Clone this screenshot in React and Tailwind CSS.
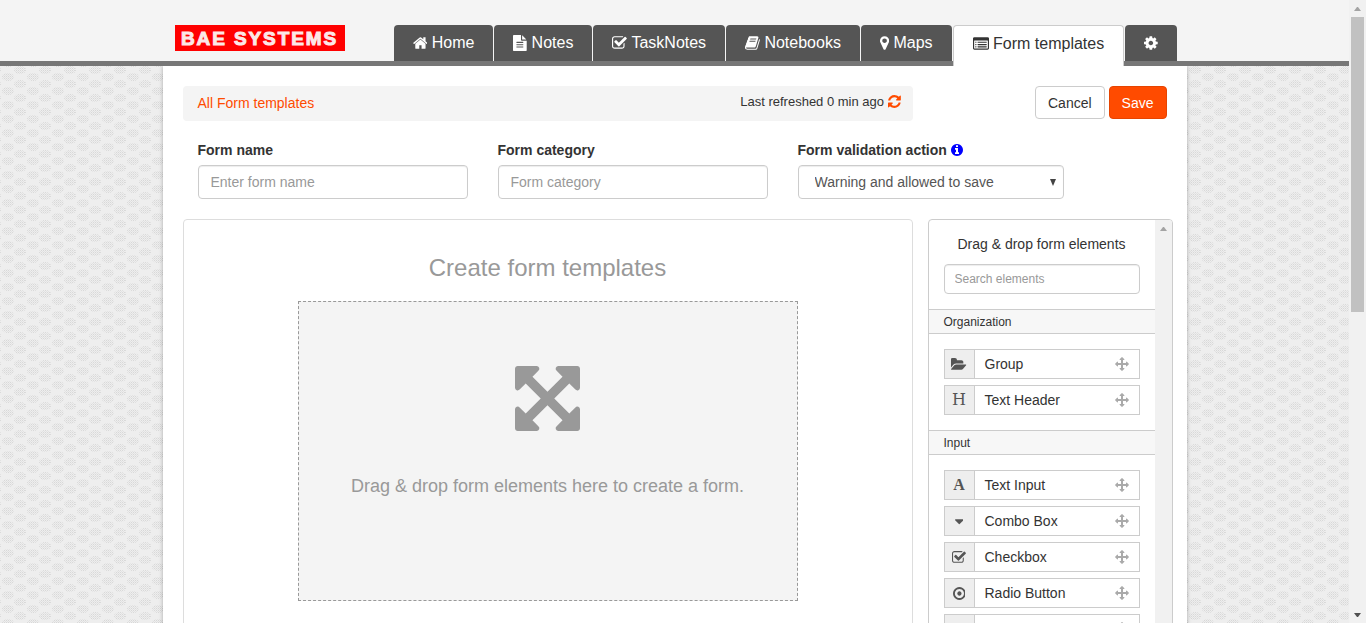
import React from "react";
import { clsx } from "clsx";

const dash = (y) =>
  `M384 ${y}v64q0 13-9.5 22.5t-22.5 9.5h-64q-13 0-22.5-9.5t-9.5-22.5v-64q0-13 9.5-22.5t22.5-9.5h64q13 0 22.5 9.5t9.5 22.5z` +
  `M1536 ${y}v64q0 13-9.5 22.5t-22.5 9.5h-960q-13 0-22.5-9.5t-9.5-22.5v-64q0-13 9.5-22.5t22.5-9.5h960q13 0 22.5 9.5t9.5 22.5z`;

const ICONS = {
  home: ["64 0 1664 1792", "M1472 992v480q0 26-19 45t-45 19h-384v-384h-256v384h-384q-26 0-45-19t-19-45v-480q0-1 .5-3t.5-3l575-474 575 474q1 2 1 6zm223-69l-62 74q-8 9-21 11h-3q-13 0-21-7l-692-577-692 577q-12 8-24 7-13-2-21-11l-62-74q-8-10-7-23.5t11-21.5l719-599q32-26 76-26t76 26l244 204v-195q0-14 9-23t23-9h192q14 0 23 9t9 23v408l219 182q10 8 11 21.5t-7 23.5z"],
  file: ["128 0 1536 1792", "M1596 476q14 14 28 36h-472v-472q22 14 36 28zm-476 164h544v1056q0 40-28 68t-68 28h-1344q-40 0-68-28t-28-68v-1600q0-40 28-68t68-28h800v544q0 40 28 68t68 28zm160 736v-64q0-14-9-23t-23-9h-704q-14 0-23 9t-9 23v64q0 14 9 23t23 9h704q14 0 23-9t9-23zm0-256v-64q0-14-9-23t-23-9h-704q-14 0-23 9t-9 23v64q0 14 9 23t23 9h704q14 0 23-9t9-23zm0-256v-64q0-14-9-23t-23-9h-704q-14 0-23 9t-9 23v64q0 14 9 23t23 9h704q14 0 23-9t9-23z"],
  check: ["64 0 1664 1792", "M1472 930v318q0 119-84.5 203.5t-203.5 84.5h-832q-119 0-203.5-84.5t-84.5-203.5v-832q0-119 84.5-203.5t203.5-84.5h832q63 0 117 25 15 7 18 23 3 17-9 29l-49 49q-10 10-23 10-3 0-9-2-23-6-45-6h-832q-66 0-113 47t-47 113v832q0 66 47 113t113 47h832q66 0 113-47t47-113v-254q0-13 9-22l64-64q10-10 23-10 6 0 12 3 20 8 20 29zm231-489l-814 814q-24 24-57 24t-57-24l-430-430q-24-24-24-57t24-57l110-110q24-24 57-24t57 24l263 263 647-647q24-24 57-24t57 24l110 110q24 24 24 57t-24 57z"],
  book: ["64 0 1664 1792", "M1703 478q40 57 18 129l-275 906q-19 64-76.5 107.5t-122.5 43.5h-923q-77 0-148.5-53.5t-99.5-131.5q-24-67-2-127 0-4 3-27t4-37q1-8-3-21.5t-3-19.5q2-11 8-21t16.5-23.5 16.5-23.5q23-38 45-91.5t30-91.5q3-10 .5-30t-.5-28q3-11 17-28t17-23q21-36 42-92t25-90q1-9-2.5-32t.5-28q4-13 22-30.5t22-22.5q19-26 42.5-84.5t27.5-96.5q1-8-3-25.5t-2-26.5q2-8 9-18t18-23 17-21q8-12 16.5-30.5t15-35 16-36 19.5-32 26.5-23.5 36-11.5 47.5 5.5l-1 3q38-9 51-9h761q74 0 114 56t18 130l-274 906q-36 119-71.5 153.5t-128.5 34.5h-869q-27 0-38 15-11 16-1 43 24 70 144 70h923q29 0 56-15.5t35-41.5l300-987q7-22 5-57 38 15 59 43zm-1064 2q-4 13 2 22.5t20 9.5h608q13 0 25.5-9.5t16.5-22.5l21-64q4-13-2-22.5t-20-9.5h-608q-13 0-25.5 9.5t-16.5 22.5zm-83 256q-4 13 2 22.5t20 9.5h608q13 0 25.5-9.5t16.5-22.5l21-64q4-13-2-22.5t-20-9.5h-608q-13 0-25.5 9.5t-16.5 22.5z"],
  marker: ["384 0 1024 1792", "M1152 640q0-106-75-181t-181-75-181 75-75 181 75 181 181 75 181-75 75-181zm256 0q0 109-33 179l-364 774q-16 33-47.5 52t-67.5 19-67.5-19-46.5-52l-365-774q-33-70-33-179 0-212 150-362t362-150 362 150 150 362z"],
  list: ["0 0 1792 1792", dash(1184) + dash(928) + dash(672) + "M1664 1376v-832q0-13-9.5-22.5t-22.5-9.5h-1472q-13 0-22.5 9.5t-9.5 22.5v832q0 13 9.5 22.5t22.5 9.5h1472q13 0 22.5-9.5t9.5-22.5zm128-1088v1088q0 66-47 113t-113 47h-1472q-66 0-113-47t-47-113v-1088q0-66 47-113t113-47h1472q66 0 113 47t47 113z"],
  cog: ["128 0 1536 1792", "M1152 896q0-106-75-181t-181-75-181 75-75 181 75 181 181 75 181-75 75-181zm512-109v222q0 12-8 23t-20 13l-185 28q-19 54-39 91 35 50 107 138 10 12 10 25t-9 23q-27 37-99 108t-94 71q-12 0-26-9l-138-108q-44 23-91 38-16 136-29 186-7 28-36 28h-222q-14 0-24.5-8.5t-11.5-21.5l-28-184q-49-16-90-37l-141 107q-10 9-25 9-14 0-25-11-126-114-165-168-7-10-7-23 0-12 8-23 15-21 51-66.5t54-70.5q-27-50-41-99l-183-27q-13-2-21-12.5t-8-23.5v-222q0-12 8-23t19-13l186-28q14-46 39-92-40-57-107-138-10-12-10-24 0-10 9-23 26-36 98.5-107.5t94.5-71.5q13 0 26 10l138 107q44-23 91-38 16-136 29-186 7-28 36-28h222q14 0 24.5 8.5t11.5 21.5l28 184q49 16 90 37l142-107q9-9 24-9 13 0 25 10 129 119 165 170 7 8 7 22 0 12-8 23-15 21-51 66.5t-54 70.5q26 50 41 98l183 28q13 2 21 12.5t8 23.5z"],
  refresh: ["128 0 1536 1792", "M1639 1056q0 5-1 7-64 268-268 434.5t-478 166.5q-146 0-282.5-55t-243.5-157l-129 129q-19 19-45 19t-45-19-19-45v-448q0-26 19-45t45-19h448q26 0 45 19t19 45-19 45l-137 137q71 66 161 102t187 36q134 0 250-65t186-179q11-17 53-117 8-23 30-23h192q13 0 22.5 9.5t9.5 22.5zm25-800v448q0 26-19 45t-45 19h-448q-26 0-45-19t-19-45 19-45l138-138q-148-137-349-137-134 0-250 65t-186 179q-11 17-53 117-8 23-30 23h-199q-13 0-22.5-9.5t-9.5-22.5v-7q65-268 270-434.5t480-166.5q146 0 284 55.5t245 156.5l130-129q19-19 45-19t45 19 19 45z"],
  info: ["128 0 1536 1792", "M1152 1376v-160q0-14-9-23t-23-9h-96v-512q0-14-9-23t-23-9h-320q-14 0-23 9t-9 23v160q0 14 9 23t23 9h96v320h-96q-14 0-23 9t-9 23v160q0 14 9 23t23 9h448q14 0 23-9t9-23zm-128-896v-160q0-14-9-23t-23-9h-192q-14 0-23 9t-9 23v160q0 14 9 23t23 9h192q14 0 23-9t9-23zm640 416q0 209-103 385.5t-279.5 279.5-385.5 103-385.5-103-279.5-279.5-103-385.5 103-385.5 279.5-279.5 385.5-103 385.5 103 279.5 279.5 103 385.5z"],
  folder: ["0 0 1820 1792", "M1815 952q0 31-31 66l-336 396q-43 51-120.5 86.5t-143.5 35.5h-1088q-34 0-60.5-13t-26.5-43q0-31 31-66l336-396q43-51 120.5-86.5t143.5-35.5h1088q34 0 60.5 13t26.5 43zm-343-344v160h-832q-94 0-197 47.5t-164 119.5l-337 396-5 6q0-4-.5-12.5t-.5-12.5v-960q0-92 66-158t158-66h320q92 0 158 66t66 158v32h544q92 0 158 66t66 158z"],
  move: ["0 0 1792 1792", "M1792 896q0 26-19 45l-256 256q-19 19-45 19t-45-19-19-45v-128h-384v384h128q26 0 45 19t19 45-19 45l-256 256q-19 19-45 19t-45-19l-256-256q-19-19-19-45t19-45 45-19h128v-384h-384v128q0 26-19 45t-45 19-45-19l-256-256q-19-19-19-45t19-45l256-256q19-19 45-19t45 19 19 45v128h384v-384h-128q-26 0-45-19t-19-45 19-45l256-256q19-19 45-19t45 19l256 256q19 19 19 45t-19 45-45 19h-128v384h384v-128q0-26 19-45t45-19 45 19l256 256q19 19 19 45z"],
  caret: ["384 0 1024 1792", "M1408 704q0 26-19 45l-448 448q-19 19-45 19t-45-19l-448-448q-19-19-19-45t19-45 45-19h896q26 0 45 19t19 45z"],
  radio: ["128 0 1536 1792", "M1152 896q0 106-75 181t-181 75-181-75-75-181 75-181 181-75 181 75 75 181zm-256-544q-148 0-273 73t-198 198-73 273 73 273 198 198 273 73 273-73 198-198 73-273-73-273-198-198-273-73zm768 544q0 209-103 385.5t-279.5 279.5-385.5 103-385.5-103-279.5-279.5-103-385.5 103-385.5 279.5-279.5 385.5-103 385.5 103 279.5 279.5 103 385.5z"],
  expand: ["128 128 1536 1536", "M1411 541l-355 355 355 355 144-144q29-31 70-14 39 17 39 59v448q0 26-19 45t-45 19h-448q-42 0-59-40-17-39 14-69l144-144-355-355-355 355 144 144q31 30 14 69-17 40-59 40h-448q-26 0-45-19t-19-45v-448q0-42 40-59 39-17 69 14l144 144 355-355-355-355-144 144q-19 19-45 19-12 0-24-5-40-17-40-59v-448q0-26 19-45t45-19h448q42 0 59 40 17 39-14 69l-144 144 355 355 355-355-144-144q-31-30-14-69 17-40 59-40h448q26 0 45 19t19 45v448q0 42-39 59-13 5-25 5-26 0-45-19z"],
};

function Icon({ name, className }) {
  const [viewBox, d] = ICONS[name];
  return (
    <svg viewBox={viewBox} fill="currentColor" aria-hidden="true" className={clsx("w-auto shrink-0", className)}>
      <path d={d} fillRule={name === "list" ? "evenodd" : "nonzero"} />
    </svg>
  );
}

const TABS = [
  { icon: "home", label: "Home" },
  { icon: "file", label: "Notes" },
  { icon: "check", label: "TaskNotes" },
  { icon: "book", label: "Notebooks" },
  { icon: "marker", label: "Maps" },
  { icon: "list", label: "Form templates", active: true },
  { icon: "cog", title: "Settings" },
];

function Tab({ icon, label, active, title }) {
  return (
    <a
      href="#"
      aria-label={title}
      aria-current={active ? "page" : undefined}
      className={clsx(
        "flex items-center rounded-t text-base leading-6 whitespace-pre",
        active
          ? "-mb-[5px] h-[41px] border border-b-0 border-[#ccc] bg-white px-[19px] pb-1 text-[#333]"
          : "h-9 bg-[#555] px-[19px] text-white"
      )}
    >
      <Icon name={icon} className="h-4" />
      {label && ` ${label}`}
    </a>
  );
}

const FIELD =
  "w-full rounded border border-[#ccc] bg-white text-[#555] shadow-[inset_0_1px_1px_rgba(0,0,0,0.075)] outline-none placeholder:text-[#999]";

function ElementRow({ icon, glyph, bold, label }) {
  return (
    <li className="flex h-[30px] items-stretch border border-[#ccc] bg-white">
      <span className="flex w-[30px] items-center justify-center border-r border-[#ccc] bg-[#eee] text-[#555]">
        {glyph && (
          <span className={clsx("font-['DejaVu_Serif','Liberation_Serif',serif] text-base leading-none", bold && "font-['Liberation_Serif',serif] font-bold")}>
            {glyph}
          </span>
        )}
        {icon && <Icon name={icon} className="h-[15px]" />}
      </span>
      <span className="flex flex-1 items-center px-2.5 text-sm">{label}</span>
      <span className="flex items-center px-2.5 text-[#aaa]">
        <Icon name="move" className="h-3.5" />
      </span>
    </li>
  );
}

function Section({ title, items }) {
  return (
    <section>
      <h3 className="border-y border-[#ccc] bg-[#f7f7f7] px-[15px] pt-1 pb-0.5 text-xs leading-[17px]">{title}</h3>
      <ul className="flex flex-col gap-1.5 p-[15px]">
        {items.map((item) => (
          <ElementRow key={item.label} {...item} />
        ))}
      </ul>
    </section>
  );
}

function Backdrop() {
  return (
    <svg className="absolute inset-0 -z-10 h-full w-full" aria-hidden="true">
      <defs>
        <pattern id="dots" width="2" height="2" patternUnits="userSpaceOnUse">
          <rect width="1" height="1" fill="#d8d8d8" />
          <rect x="1" y="1" width="1" height="1" fill="#e2e2e2" />
        </pattern>
        <pattern id="scales" width="25" height="14" patternUnits="userSpaceOnUse">
          <rect width="25" height="14" fill="#eeeeee" />
          <ellipse cx="8" cy="7" rx="6" ry="4" fill="url(#dots)" />
          <ellipse cx="20" cy="0" rx="6" ry="4" fill="url(#dots)" />
          <ellipse cx="20" cy="14" rx="6" ry="4" fill="url(#dots)" />
          <ellipse cx="-5" cy="0" rx="6" ry="4" fill="url(#dots)" />
          <ellipse cx="-5" cy="14" rx="6" ry="4" fill="url(#dots)" />
        </pattern>
      </defs>
      <rect width="100%" height="100%" fill="url(#scales)" shapeRendering="crispEdges" />
    </svg>
  );
}

export default function App() {
  return (
    <div className="flex h-screen overflow-hidden font-['Liberation_Sans',Arial,sans-serif] text-sm leading-5 text-[#333]">
      <div className="relative isolate flex min-w-0 flex-1 flex-col overflow-hidden">
        <Backdrop />
        <header className="shrink-0 border-b-[5px] border-[#777] bg-[#f4f4f4]">
          <div className="mx-auto flex max-w-[1024px] items-start pt-[25px] pl-3">
            <a href="#" className="mr-[49px] flex h-[26px] w-[170px] items-center justify-center bg-[#f00] text-[19px] leading-none font-bold tracking-widest whitespace-nowrap text-[#fce8e8] [-webkit-text-stroke:1px_#fce8e8]">
              BAE SYSTEMS
            </a>
            <nav className="flex items-start gap-px">
              {TABS.map((tab) => (
                <Tab key={tab.icon} {...tab} />
              ))}
            </nav>
          </div>
        </header>

        <main className="mx-auto flex w-full max-w-[1024px] flex-1 flex-col bg-white px-5 pt-5 shadow-[0_0_4px_rgba(0,0,0,0.3)] [clip-path:inset(0_-6px)]">
          <div className="flex items-start justify-between">
            <div className="flex h-[35px] w-[730px] items-center justify-between rounded bg-[#f4f4f4] pr-3 pb-0.5 pl-[15px]">
              <a href="#" className="text-[#ff4b00]">All Form templates</a>
              <span className="flex items-center pb-0.5 text-[13px] whitespace-pre">
                {"Last refreshed 0 min ago "}
                <button type="button" aria-label="Refresh" className="text-[#ff4b00]">
                  <Icon name="refresh" className="h-[15px]" />
                </button>
              </span>
            </div>
            <div className="flex gap-1">
              <button type="button" className="h-[33px] rounded border border-[#ccc] bg-white px-3">Cancel</button>
              <button type="button" className="h-[33px] rounded border border-[#e64400] bg-[#ff4b00] px-3 text-white">Save</button>
            </div>
          </div>

          <div className="mt-[19px] flex gap-[30px] px-[15px]">
            <div className="flex w-[270px] flex-col gap-[5px]">
              <label htmlFor="name" className="font-bold">Form name</label>
              <input id="name" type="text" placeholder="Enter form name" className={clsx(FIELD, "h-[34px] px-3")} />
            </div>
            <div className="flex w-[270px] flex-col gap-[5px]">
              <label htmlFor="category" className="font-bold">Form category</label>
              <input id="category" type="text" placeholder="Form category" className={clsx(FIELD, "h-[34px] px-3")} />
            </div>
            <div className="flex w-[266px] flex-col gap-[5px]">
              <label htmlFor="action" className="flex items-center gap-1 font-bold">
                Form validation action
                <Icon name="info" className="h-3.5 text-[#00f]" />
              </label>
              <div className="relative">
                <select id="action" className={clsx(FIELD, "h-[34px] appearance-none px-4")}>
                  <option>Warning and allowed to save</option>
                </select>
                <svg viewBox="0 0 6 7" className="pointer-events-none absolute top-3.5 right-2 h-[7px] w-1.5" aria-hidden="true">
                  <path d="M0 0H6L3 7Z" fill="#444" />
                </svg>
              </div>
            </div>
          </div>

          <div className="-mr-[6px] mt-5 flex items-stretch gap-[15px]">
            <section className="flex h-[600px] w-[730px] flex-col items-center rounded border border-[#ddd] pt-[31px] text-[#999]">
              <h1 className="text-2xl leading-[34px]">Create form templates</h1>
              <div className="mt-4 flex h-[300px] w-[500px] flex-col items-center border border-dashed border-[#999] bg-[#f4f4f4] pt-16">
                <Icon name="expand" className="h-[65px]" />
                <p className="mt-[43px] text-lg leading-6">Drag &amp; drop form elements here to create a form.</p>
              </div>
            </section>

            <aside className="flex h-[600px] flex-1 overflow-hidden rounded border border-[#ccc]">
              <div className="min-w-0 flex-1">
                <div className="px-[15px] pt-3.5 pb-[15px] text-center">
                  <label htmlFor="search" className="block">Drag &amp; drop form elements</label>
                  <input id="search" type="text" placeholder="Search elements" className={clsx(FIELD, "mt-2.5 block h-[30px] px-2.5 text-xs")} />
                </div>
                <Section
                  title="Organization"
                  items={[
                    { icon: "folder", label: "Group" },
                    { glyph: "H", label: "Text Header" },
                  ]}
                />
                <Section
                  title="Input"
                  items={[
                    { glyph: "A", bold: true, label: "Text Input" },
                    { icon: "caret", label: "Combo Box" },
                    { icon: "check", label: "Checkbox" },
                    { icon: "radio", label: "Radio Button" },
                    { label: "" },
                  ]}
                />
              </div>
              <div className="flex w-[17px] justify-center bg-[#f1f1f1] pt-[7px]">
                <svg viewBox="0 0 7 4" className="h-1 w-[7px]" aria-hidden="true">
                  <path d="M3 0H4L7 4H0Z" fill="#a3a3a3" />
                </svg>
              </div>
            </aside>
          </div>
        </main>
      </div>

      <div className="flex w-[17px] shrink-0 flex-col items-center justify-between bg-[#f1f1f1]" aria-hidden="true">
        <div className="flex w-full flex-col items-center">
          <span className="flex h-[17px] items-center">
            <svg viewBox="0 0 7 4" className="h-1 w-[7px]"><path d="M3 0H4L7 4H0Z" fill="#a3a3a3" /></svg>
          </span>
          <span className="h-[295px] w-[13px] bg-[#c1c1c1]" />
        </div>
        <span className="flex h-[17px] items-center">
          <svg viewBox="0 0 7 4" className="h-1 w-[7px]"><path d="M0 0H7L4 4H3Z" fill="#505050" /></svg>
        </span>
      </div>
    </div>
  );
}
